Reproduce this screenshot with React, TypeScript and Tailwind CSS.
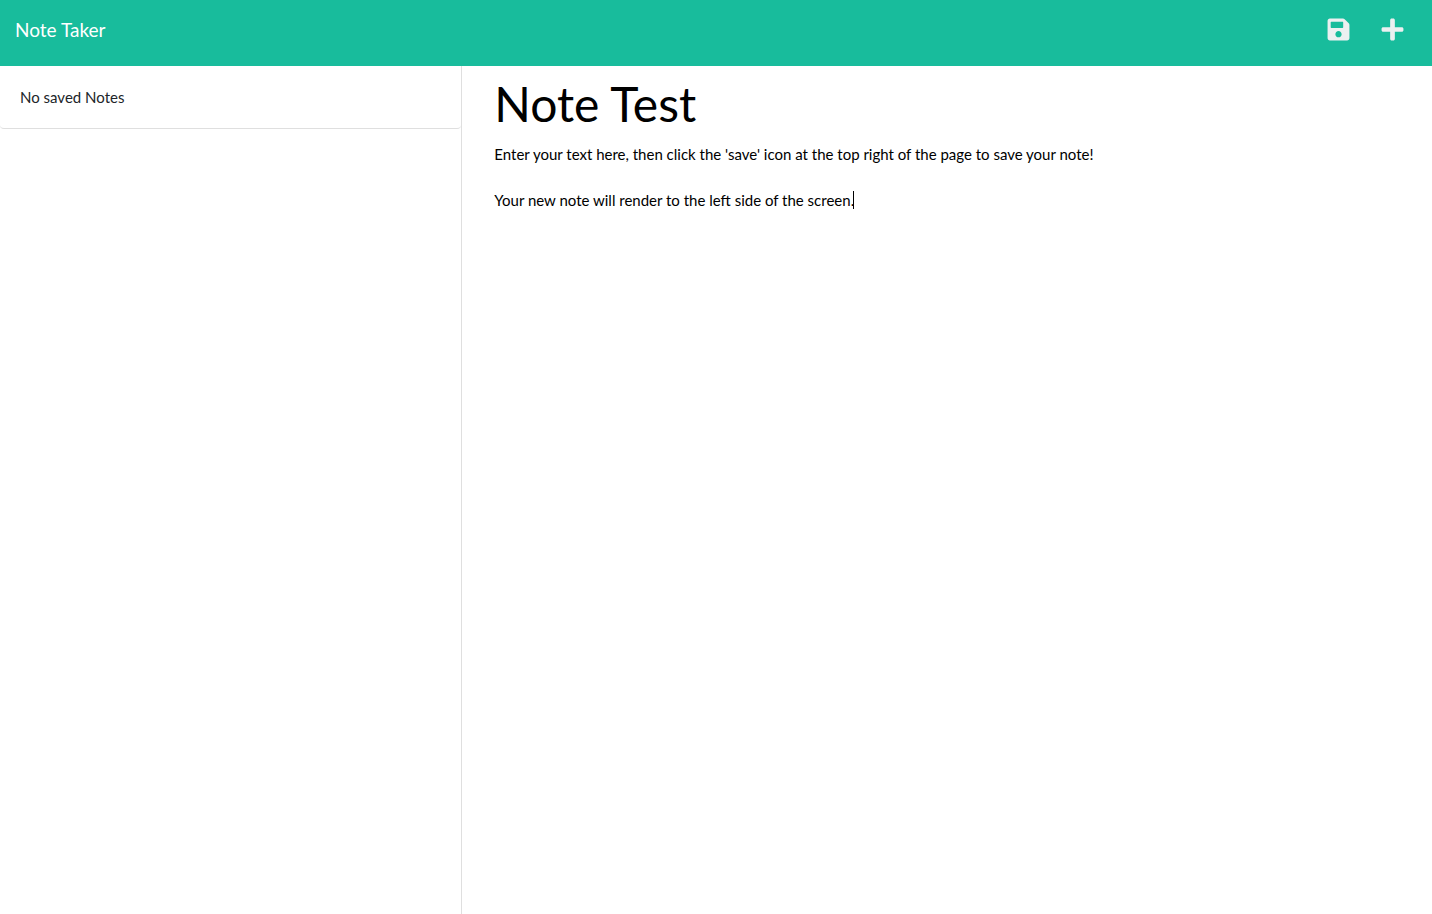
import { useState } from "react";
import { FaPlus, FaSave } from "react-icons/fa";

export default function App() {
  const [title, setTitle] = useState("Note Test");
  const [text, setText] = useState(
    "Enter your text here, then click the 'save' icon at the top right of the page to save your note!\n\nYour new note will render to the left side of the screen."
  );
  const [touched, setTouched] = useState(false);

  return (
    <div className="flex min-h-screen flex-col bg-white font-['Lato',sans-serif] text-[15px] text-[#212529]">
      <header className="flex h-[66px] items-center justify-between bg-[#18bc9c] px-[15px] pb-2">
        <a href="#" className="pt-0.5 text-[19px] leading-7 text-white">
          Note Taker
        </a>
        <div className="flex items-center gap-[29px] pr-3 text-[#ecf0f1]">
          <button type="button" aria-label="Save note">
            <FaSave size={25} />
          </button>
          <button type="button" aria-label="New note">
            <FaPlus size={25} />
          </button>
        </div>
      </header>
      <div className="flex grow">
        <aside className="w-[calc(100%/3-15px)] shrink-0 border-r border-[#dfdfdf]">
          <ul>
            <li className="rounded-b border-b border-[#dfdfdf] p-5 leading-[22px]">No saved Notes</li>
          </ul>
        </aside>
        <main className="flex grow flex-col px-8 pt-2">
          <input
            aria-label="Note title"
            value={title}
            onChange={(e) => setTitle(e.target.value)}
            className="w-full text-5xl leading-[60px] text-black outline-none"
          />
          <div className="relative mt-[9px] flex grow">
            <textarea
              aria-label="Note text"
              value={text}
              onFocus={() => setTouched(true)}
              onChange={(e) => setText(e.target.value)}
              className="w-full resize-none leading-[23px] text-black outline-none"
            />
            {/* Insertion point shown at the end of the draft until the editor takes focus */}
            {!touched && <span aria-hidden="true" className="absolute top-12 left-[359px] h-[18px] w-px bg-black" />}
          </div>
        </main>
      </div>
    </div>
  );
}
